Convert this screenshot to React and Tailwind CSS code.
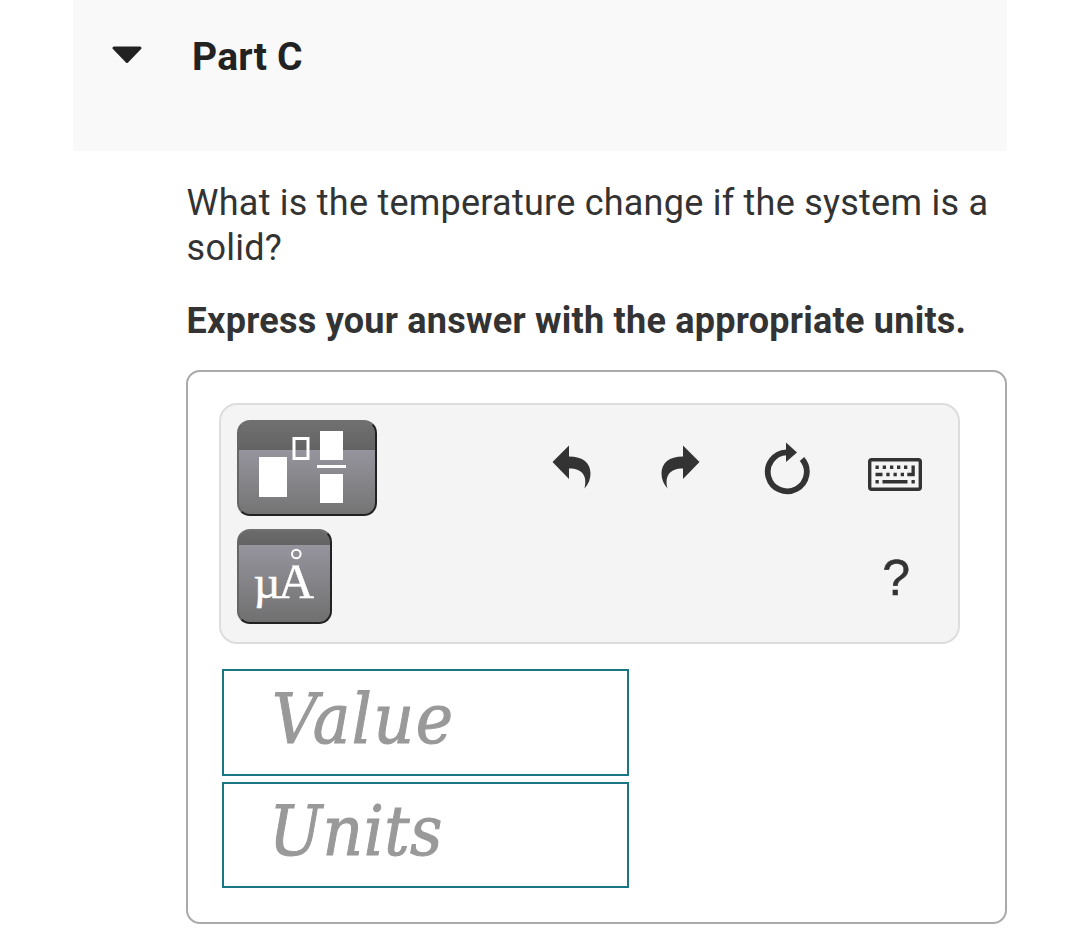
import React, { useState } from 'react';

const TemplatesIcon = () => (
  <svg width="100" height="80" viewBox="0 0 100 80" fill="white">
    <rect x="2" y="29" width="28" height="40" />
    <rect x="37" y="10.5" width="14" height="20" fill="none" stroke="white" strokeWidth="3" />
    <rect x="63" y="3" width="23" height="29" />
    <rect x="60" y="37" width="29" height="3" />
    <rect x="63" y="46" width="23" height="29" />
  </svg>
);

const UnitsIcon = () => (
  <svg width="91" height="91" viewBox="0 0 91 91" fill="white" stroke="white" strokeWidth="0.5">
    <clipPath id="below-ring">
      <rect x="0" y="34.5" width="91" height="56.5" />
    </clipPath>
    <text x="14.5" y="67" fontSize="47" fontFamily="Liberation Serif, serif" clipPath="url(#below-ring)">
      µ<tspan x="39" fontSize="50">Å</tspan>
    </text>
    <circle cx="57.3" cy="23" r="4.3" fill="none" strokeWidth="2" />
  </svg>
);

const UndoIcon = () => (
  <svg width="40" height="46" viewBox="0 0 40 46" fill="#333">
    <path d="M0.5 17 17 0.5V11.5C31 11.5 38.5 18 38.5 28.5C38.5 34 36.5 39 32.5 43.5C35.5 31.5 31 23.5 17 23.5V34Z" />
  </svg>
);

const ResetIcon = () => (
  <svg width="48" height="54" viewBox="0 0 48 54">
    <path d="M23.5 10.3A19.5 19.5 0 1 0 39 17" fill="none" stroke="#333" strokeWidth="5.8" />
    <path d="M23 0.5 34 10.5 23 20Z" fill="#333" />
  </svg>
);

const KeyboardIcon = () => (
  <svg width="54" height="33" viewBox="0 0 54 33" fill="#333">
    <rect x="1.7" y="1.7" width="50.6" height="29.6" rx="2" fill="none" stroke="#333" strokeWidth="3.4" />
    <path d="M7.5 7.5h3.3v3.5H7.5zM14.7 7.5H18v3.5h-3.3zM22 7.5h3.3v3.5H22zM29 7.5h3.3v3.5H29zM36 7.5h3.3v3.5H36z" />
    <path d="M43.5 7.5h3.3v10.7h-7.5v-3.4h4.2z" />
    <path d="M7.5 14.8h7v3.4h-7zM18.3 14.8h3.3v3.4h-3.3zM25.5 14.8h3.3v3.4h-3.3zM32.7 14.8H36v3.4h-3.3z" />
    <path d="M7.5 22h3.3v3.5H7.5zM14.5 22h25v3.5h-25zM43.5 22h3.3v3.5h-3.3z" />
  </svg>
);

const App = () => {
  const [answer, setAnswer] = useState({ value: '', units: '' });

  const fields = [
    { id: 'value', label: 'Value', style: 'h-[107px] pb-[7px] pl-[48px] tracking-[1.6px]' },
    { id: 'units', label: 'Units', style: 'h-[106px] pb-[9px] pl-[45px] tracking-[0.5px]' }
  ];

  return (
    <div className="h-[944px] bg-white pl-[73px] pr-[73px] font-['Roboto',sans-serif] text-[#333]">
      <header className="flex h-[151px] items-start bg-[#f9f9f9] pl-[39px] pt-[34px]">
        <svg className="mt-[12px]" width="30" height="18" viewBox="0 0 30 18">
          <path d="M2 2H28L15 15.5Z" fill="#222" stroke="#222" strokeWidth="3" strokeLinejoin="round" />
        </svg>
        <h2 className="ml-[50px] text-[39px] font-bold leading-[47px] tracking-[0.2px] text-[#222]">Part C</h2>
      </header>

      <main className="ml-[113px]">
        <p className="pl-[0.6px] pt-[30px] text-[36px] leading-[45px] tracking-[0.24px]">
          What is the temperature change if the system is a solid?
        </p>
        <p className="mt-[28px] whitespace-nowrap pl-[0.6px] text-[36px] font-bold leading-[45px] tracking-[0.25px]">
          Express your answer with the appropriate units.
        </p>

        <section className="mt-[26px] h-[554px] rounded-[14px] border-2 border-[#aaa] pl-[31px] pt-[31px]">
          {/* Equation toolbar */}
          <div className="flex h-[241px] w-[741px] justify-between rounded-[18px] border-2 border-[#ddd] bg-[#f4f4f4] pl-4 pt-[15px]">
            <div className="flex flex-col gap-[13px]">
              <button className="flex h-24 w-[140px] items-center justify-center rounded-[13px] border-2 border-b-[#222] border-l-[#666] border-r-[#222] border-t-[#707070] bg-[linear-gradient(#707070,#636363_28px,#96959e_28px,#747474)]">
                <TemplatesIcon />
              </button>
              <button className="h-[95px] w-[95px] rounded-[13px] border-2 border-b-[#222] border-l-[#666] border-r-[#222] border-t-[#707070] bg-[linear-gradient(#6a6a6a,#636363_14px,#96959e_14px,#707070)]">
                <UnitsIcon />
              </button>
            </div>

            <div className="mr-[36px] flex flex-col items-end">
              <div className="flex items-start">
                <button className="mt-[25px]"><UndoIcon /></button>
                <button className="ml-[68px] mt-[25px] -scale-x-100"><UndoIcon /></button>
                <button className="ml-[63px] mt-[22px]"><ResetIcon /></button>
                <button className="ml-[57px] mt-[38px]"><KeyboardIcon /></button>
              </div>
              <button className="mr-[12px] mt-[52px] font-['Liberation_Sans',sans-serif] text-[50px] leading-[60px] [-webkit-text-stroke:0.5px_#333]">?</button>
            </div>
          </div>

          {/* Answer fields */}
          <div className="ml-[3px] mt-[25px] flex w-[407px] flex-col gap-[6px]">
            {fields.map((field) => (
              <input
                key={field.id}
                type="text"
                placeholder={field.label}
                value={answer[field.id]}
                onChange={(e) => setAnswer({ ...answer, [field.id]: e.target.value })}
                className={`${field.style} w-full border-2 border-[#1b7684] bg-white font-['DejaVu_Serif_Condensed','DejaVu_Serif',serif] text-[70px] italic outline-none placeholder:text-[#999] [-webkit-text-stroke:1px_#999]`}
              />
            ))}
          </div>
        </section>
      </main>
    </div>
  );
};

export default App;
